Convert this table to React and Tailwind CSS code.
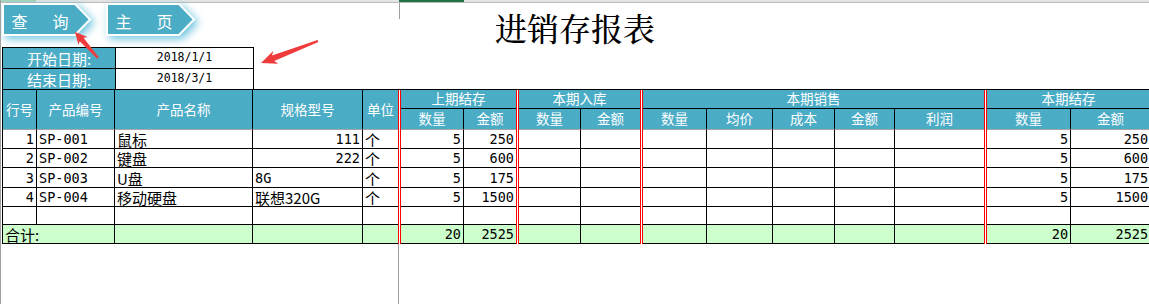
import React from 'react';

// 进销存报表 - Excel 截图还原

const TEAL = 'bg-[#4bacc6]';
const isCjk = (s) => /[\u4e00-\u9fff]/.test(String(s));

const NavButton = ({ label }) => (
  <div className="relative h-[33px] w-[90px]">
    <svg
      className="absolute inset-0 overflow-visible [filter:drop-shadow(3px_3px_4px_rgba(90,190,220,0.9))]"
      width="90"
      height="33"
      viewBox="0 0 90 33"
    >
      <polygon points="1,1 73,1 88,16.5 73,32 1,32" fill="#4bacc6" stroke="#ffffff" strokeWidth="2" />
    </svg>
    <div className="relative flex h-full w-[76px] items-center justify-center gap-[25px] pt-[2px] text-[16px] leading-none text-white">
      <span>{label[0]}</span>
      <span>{label[1]}</span>
    </div>
  </div>
);

const DateRow = ({ label, value }) => (
  <div className="flex h-[21px]">
    <div className={`flex w-[113px] items-center justify-center border-l border-t border-black ${TEAL} text-[15px] leading-none text-white`}>
      {label}
    </div>
    <div className="flex w-[139px] items-center justify-center border-l border-r border-t border-black bg-white font-['DejaVu_Sans_Mono',monospace] text-[11.5px] leading-none text-black">
      {value}
    </div>
  </div>
);

// 16 data columns; a 3px red double line sits before columns 5, 7, 9 and 14
const widths = [34, 78, 138, 110, 35, 63, 52, 62, 59, 64, 66, 62, 60, 89, 84, 80];
const sepBefore = [5, 7, 9, 14];
const noRight = [4, 6, 8, 13];

const SEP = 'w-[3px] p-0 bg-[linear-gradient(90deg,#ff0000_1px,#ffffff_1px,#ffffff_2px,#ff0000_2px)]';

const rows = [
  ['1', 'SP-001', '鼠标', '111', '个', '5', '250', '5', '250'],
  ['2', 'SP-002', '键盘', '222', '个', '5', '600', '5', '600'],
  ['3', 'SP-003', 'U盘', '8G', '个', '5', '175', '5', '175'],
  ['4', 'SP-004', '移动硬盘', '联想320G', '个', '5', '1500', '5', '1500'],
];

const Cell = ({ children, idx, right, green, span = 1 }) => {
  const cjk = isCjk(children ?? '');
  return (
    <td
      colSpan={span}
      className={`border-b border-black p-0 px-[2px] align-bottom leading-[17px] whitespace-nowrap ${
        noRight.includes(idx) ? '' : 'border-r'
      } ${right ? 'text-right' : 'text-left'} ${
        cjk ? "font-['Noto_Sans_CJK_SC',sans-serif] text-[15px]" : "font-['DejaVu_Sans_Mono',monospace] text-[13.5px]"
      } ${green ? 'bg-[#ccffcc]' : 'bg-white'}`}
    >
      {children}
    </td>
  );
};

const withSeps = (cells, start = 0) =>
  cells.flatMap((c, i) => (sepBefore.includes(i + start) ? [<td key={`s${i}`} className={SEP} />, c] : [c]));

const DataRow = ({ r, h }) => {
  const vals = [r[0], r[1], r[2], r[3], r[4], r[5], r[6], '', '', '', '', '', '', '', r[7], r[8]];
  const rightAlign = (i) => i === 0 || i >= 5 || (i === 3 && /^\d+$/.test(r[3]));
  return (
    <tr className={h}>
      {withSeps(
        vals.map((v, i) => (
          <Cell key={i} idx={i} right={rightAlign(i)}>
            {v}
          </Cell>
        ))
      )}
    </tr>
  );
};

const th = `${TEAL} p-0 text-center align-middle font-normal text-[13.5px] leading-none text-white whitespace-nowrap`;

const App = () => {
  const totals = ['', '', '', '20', '2525', '', '', '', '', '', '', '', '20', '2525'];
  return (
    <div className="relative h-[304px] w-[1149px] overflow-hidden border-l border-[#a0a0a0] bg-white font-['Noto_Sans_CJK_SC',sans-serif]">
      {/* excel column header strip */}
      <div className="flex h-[3px] border-b border-[#bcbcbc] bg-[#e4e4e4]">
        <div className="w-[35px] bg-[#a9d6b9]" />
        <div className="w-[363px]" />
        <div className="w-[65px] bg-[#217346]" />
      </div>

      {/* top area */}
      <div className="flex h-[86px]">
        <div className="flex w-[398px] flex-col">
          <div className="flex h-[44px] gap-[14px] pl-[1px]">
            <NavButton label="查询" />
            <NavButton label="主页" />
          </div>
          <div className="pl-[1px]">
            <DateRow label="开始日期:" value="2018/1/1" />
            <DateRow label="结束日期:" value="2018/3/1" />
          </div>
        </div>
        <div className="relative flex-1">
          <div className="absolute left-0 top-0 h-[16px] w-px bg-[#a0a0a0]" />
          <div className="pl-[96px] pt-[8px] font-['Noto_Serif_CJK_SC','Noto_Sans_CJK_SC',serif] text-[32px] font-medium leading-none text-black">
            进销存报表
          </div>
        </div>
      </div>

      {/* report table */}
      <table className="ml-[1px] w-[1149px] table-fixed border-separate border-spacing-0 border-l border-t border-black">
        <colgroup>
          {withSeps(widths.map((w, i) => <col key={i} style={{ width: w }} />)).map((c, i) =>
            c.type === 'td' ? <col key={`sc${i}`} style={{ width: 3 }} /> : c
          )}
        </colgroup>
        <thead>
          <tr className="h-[19px]">
            {['行号', '产品编号', '产品名称', '规格型号'].map((t) => (
              <th key={t} rowSpan={2} className={`${th} border-b border-r border-b-[#a6a6a6] border-r-black`}>
                {t}
              </th>
            ))}
            <th rowSpan={2} className={`${th} border-b border-b-[#a6a6a6]`}>单位</th>
            <th rowSpan={2} className={SEP} />
            <th colSpan={2} className={`${th} border-b border-black`}>上期结存</th>
            <th rowSpan={2} className={SEP} />
            <th colSpan={2} className={`${th} border-b border-black`}>本期入库</th>
            <th rowSpan={2} className={SEP} />
            <th colSpan={5} className={`${th} border-b border-black`}>本期销售</th>
            <th rowSpan={2} className={SEP} />
            <th colSpan={2} className={`${th} border-b border-r border-black`}>本期结存</th>
          </tr>
          <tr className="h-[21px]">
            {['数量', '金额', '数量', '金额', '数量', '均价', '成本', '金额', '利润', '数量', '金额'].map((t, i) => (
              <th
                key={i}
                className={`${th} border-b border-b-[#a6a6a6] ${noRight.includes(i + 5) ? '' : 'border-r border-r-black'}`}
              >
                {t}
              </th>
            ))}
          </tr>
        </thead>
        <tbody>
          <DataRow r={rows[0]} h="h-[19px]" />
          <DataRow r={rows[1]} h="h-[19px]" />
          <DataRow r={rows[2]} h="h-[20px]" />
          <DataRow r={rows[3]} h="h-[19px]" />
          <DataRow r={['', '', '', '', '', '', '', '', '']} h="h-[18px]" />
          <tr className="h-[19px]">
            <td
              colSpan={2}
              className="border-b border-r border-black bg-[#ccffcc] p-0 px-[2px] align-bottom text-[15px] leading-[17px]"
            >
              合计:
            </td>
            {withSeps(
              totals.map((v, i) => (
                <Cell key={i} idx={i + 2} right={i > 1} green>
                  {v}
                </Cell>
              )),
              2
            )}
          </tr>
        </tbody>
      </table>

      {/* blank sheet below */}
      <div className="h-[70px] w-[398px] border-r border-[#a0a0a0]" />

      {/* red annotation arrows */}
      <svg className="pointer-events-none absolute left-0 top-0" width="1149" height="304" viewBox="0 0 1149 304">
        <polygon points="74,32 86.5,37 82.5,37.8 97.7,57.3 96.3,58.7 78.7,41.2 77.5,45" fill="#ef3b3b" />
        <polygon points="260,63 277.4,63.7 273.2,61.1 317.4,41.9 316.6,40.1 271,55.5 272.4,50.7" fill="#ef3b3b" />
      </svg>
    </div>
  );
};

export default App;
